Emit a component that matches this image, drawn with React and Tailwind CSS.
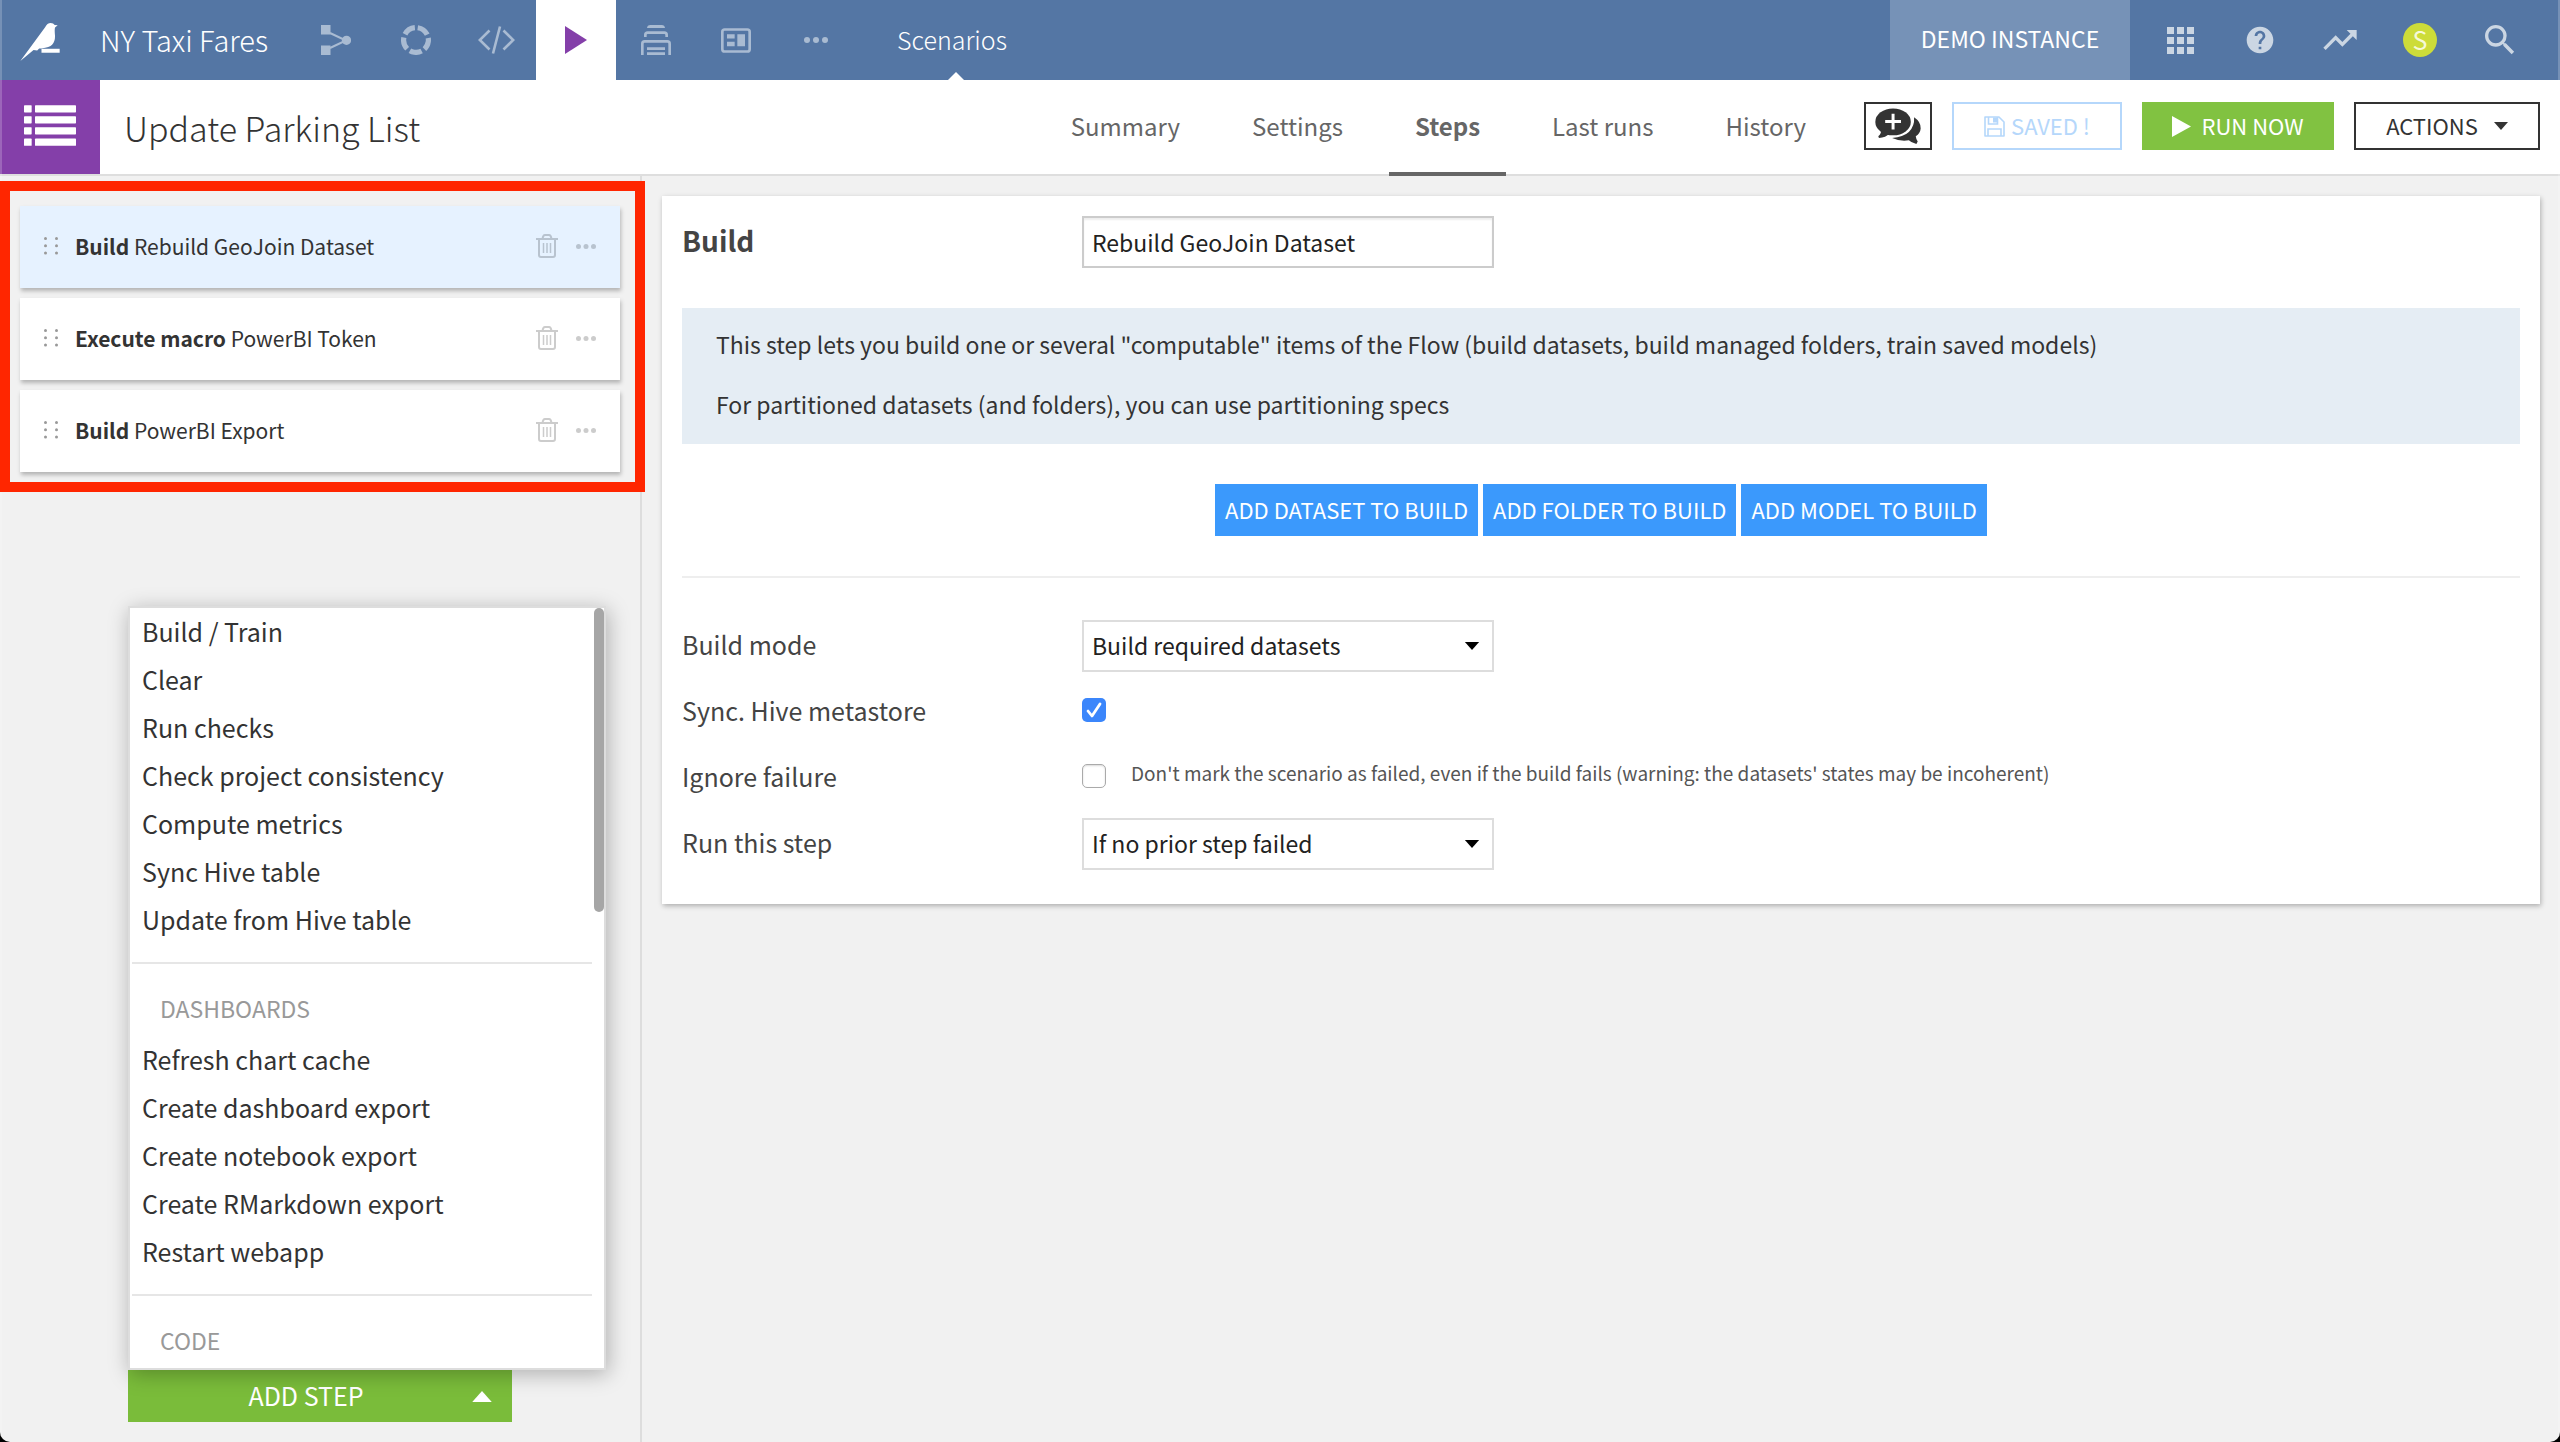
import { MdHelp, MdSearch, MdTrendingUp } from "react-icons/md";

const Bird = () => (
  <svg viewBox="60 71 121 117" className="h-10 w-10 fill-white" aria-hidden="true">
    <path d="M61 187 L136 85 Q142 72 153 72 Q161 72 165 78 L174 79 L166 86 Q164 92 166 112 Q166 128 157 138 Q150 146 125 149 L118 149 L112 155 L101 154 Z" />
    <path d="M125 150h55v12h-55z" />
  </svg>
);

const FlowIcon = () => (
  <svg viewBox="0 0 30 30" className="size-[30px] fill-current stroke-current" aria-hidden="true">
    <path d="M9 8 L25 15.500 L9 23" fill="none" strokeWidth="2" />
    <path d="M0 0h9.500v9.500H0zM0 20.500h9.500V30H0z" stroke="none" />
    <circle cx="25.500" cy="15.300" r="4.600" stroke="none" />
  </svg>
);

const RingIcon = () => (
  <svg viewBox="0 0 30 30" className="size-[30px]" aria-hidden="true">
    <circle
      cx="15"
      cy="15"
      r="12.400"
      fill="none"
      stroke="currentColor"
      strokeWidth="5.200"
      strokeDasharray="12.180 3.400"
      transform="rotate(-82 15 15)"
    />
  </svg>
);

const CodeIcon = () => (
  <svg viewBox="0 0 37 28" className="h-7 w-[37px]" fill="none" stroke="currentColor" strokeWidth="2.600" aria-hidden="true">
    <path d="M11.500 4.500 L1.800 14 L11.500 23.500 M25.500 4.500 L35.200 14 L25.500 23.500 M22 .5 L15 27.500" />
  </svg>
);

const PlayIcon = () => (
  <svg viewBox="0 0 22 28" className="h-7 w-[22px] fill-[#843fa9]" aria-hidden="true">
    <path d="M0 0 L22 14 L0 28z" />
  </svg>
);

const StackIcon = () => (
  <svg viewBox="333 75 90 90" className="size-[30px]" aria-hidden="true">
    <path d="M351 84 Q352 75 361 75 H395 Q404 75 405 84z" fill="currentColor" />
    <path
      d="M346 111 V105 Q346 98 353 98 H403 Q410 98 410 105 V111 M337 165 V131 Q337 124 344 124 H412 Q419 124 419 131 V165 M351 146 H405 M351 161 H405"
      fill="none"
      stroke="currentColor"
      strokeWidth="8"
    />
  </svg>
);

const LayoutIcon = () => (
  <svg viewBox="573 84 90 74" className="h-[25px] w-[30px]" aria-hidden="true">
    <rect x="577" y="88" width="82" height="66" rx="7" fill="none" stroke="currentColor" strokeWidth="8" />
    <path d="M591 102h23v13h-23zM591 125h23v13h-23zM622 102h23v36h-23z" fill="currentColor" />
  </svg>
);

const DotsIcon = ({ className }) => (
  <svg viewBox="0 0 24 6" className={className} fill="currentColor" aria-hidden="true">
    <circle cx="3" cy="3" r="3" />
    <circle cx="12" cy="3" r="3" />
    <circle cx="21" cy="3" r="3" />
  </svg>
);

const GridIcon = () => (
  <svg viewBox="0 0 27 27" className="size-[27px]" fill="currentColor" aria-hidden="true">
    {[0, 10, 20].map((y) =>
      [0, 10, 20].map((x) => <rect key={`${x}-${y}`} x={x} y={y} width="7" height="7" />)
    )}
  </svg>
);

const ListIcon = () => (
  <svg viewBox="72 316 156 122" className="h-[41px] w-[52px]" fill="#fff" aria-hidden="true">
    {[316, 349, 382, 416].map((y) => (
      <g key={y}>
        <rect x="72" y={y} width="23" height="22" rx="2" />
        <rect x="105" y={y} width="123" height="22" rx="2" />
      </g>
    ))}
  </svg>
);

const ChatIcon = () => (
  <svg viewBox="74 290 140 112" className="h-[37px] w-[46px]" fill="currentColor" aria-hidden="true">
    <ellipse cx="129" cy="332" rx="54" ry="41" />
    <path d="M92 350 Q95 368 84 376 L86 381 Q106 381 120 366Z" />
    <path d="M193 318 Q214 332 213 352 Q212 366 198 376 Q199 385 204 392 L200 399 Q185 396 177 388 Q150 392 126 381 Q160 379 177 363 Q195 345 193 318Z" />
    <path d="M105 331 H153 M129 307 V355" stroke="#fff" strokeWidth="9" />
  </svg>
);

const SaveIcon = () => (
  <svg viewBox="0 0 21 21" className="size-[21px]" fill="none" stroke="currentColor" strokeWidth="1.600" aria-hidden="true">
    <path d="M1 1 H15 L20 6 V20 H1z" strokeLinejoin="round" />
    <path d="M4.500 1 V8 H13.500 V1 M4 20 V13 H17 V20" />
    <path d="M9 1.500h4v5h-4z" fill="currentColor" stroke="none" />
  </svg>
);

const TrashIcon = () => (
  <svg viewBox="0 0 22 24" className="h-6 w-[22px]" fill="none" stroke="currentColor" strokeWidth="2" aria-hidden="true">
    <path d="M0 5 H22 M6.500 5 Q7 1 9 1 H13 Q15 1 15.500 5 M3 5 V21 Q3 23 5 23 H17 Q19 23 19 21 V5" />
    <path d="M7.500 9 V19 M11 9 V19 M14.500 9 V19" strokeWidth="1.500" />
  </svg>
);

const GripIcon = () => (
  <svg viewBox="0 0 14 18" className="h-[18px] w-3.5 fill-[#999]" aria-hidden="true">
    {[1.5, 8.8, 16].map((y) => (
      <g key={y}>
        <circle cx="1.500" cy={y} r="1.500" />
        <circle cx="12.500" cy={y} r="1.500" />
      </g>
    ))}
  </svg>
);

const Caret = ({ className }) => (
  <svg viewBox="0 0 16 9" className={className} fill="currentColor" aria-hidden="true">
    <path d="M0 0h16L8 9z" />
  </svg>
);

const navIcons = [
  { name: "Flow", Icon: FlowIcon },
  { name: "Lab", Icon: RingIcon },
  { name: "Code", Icon: CodeIcon },
  { name: "Automation", Icon: PlayIcon, active: true },
  { name: "Deploy", Icon: StackIcon },
  { name: "Dashboards", Icon: LayoutIcon },
  { name: "More", Icon: () => <DotsIcon className="h-1.5 w-6" /> },
];

const TopNav = () => (
  <header className="flex h-20 bg-[#5476a4] text-white">
    <a href="#home" aria-label="Home" className="flex w-20 items-center justify-center pt-1">
      <Bird />
    </a>
    <a href="#project" className="flex w-[216px] items-center pl-5 text-[29px] font-light whitespace-nowrap">
      NY Taxi Fares
    </a>
    <nav className="flex">
      {navIcons.map(({ name, Icon, active }) => (
        <a
          key={name}
          href="#nav"
          aria-label={name}
          className={
            active
              ? "flex w-20 items-center justify-center bg-white"
              : "flex w-20 items-center justify-center text-[#a9bbd2]"
          }
        >
          <Icon />
        </a>
      ))}
      <a href="#scenarios" className="relative flex items-center pr-[50px] pl-[41px] text-[25px] font-light">
        Scenarios
        <svg viewBox="0 0 16 8" className="absolute bottom-0 left-1/2 h-2 w-4 -translate-x-1/2 fill-white" aria-hidden="true">
          <path d="M0 8L8 0l8 8z" />
        </svg>
      </a>
    </nav>
    <div className="ml-auto flex w-60 items-center justify-center bg-[#7692b7] pb-1 text-[23px]">
      DEMO INSTANCE
    </div>
    <div className="flex pr-5 pl-2.5 text-[#cbd6e3]">
      <button aria-label="Applications" className="flex w-20 items-center justify-center">
        <GridIcon />
      </button>
      <button aria-label="Help" className="flex w-20 items-center justify-center">
        <MdHelp className="size-8" />
      </button>
      <button aria-label="Activity" className="flex w-20 items-center justify-center">
        <MdTrendingUp className="size-10" />
      </button>
      <button aria-label="Profile" className="flex w-20 items-center justify-center">
        <span className="flex size-[34px] items-center justify-center rounded-full bg-[#cddc39] pb-0.5 text-[25px] leading-none text-[#f6f9d8]">
          S
        </span>
      </button>
      <button aria-label="Search" className="flex w-20 items-center justify-center">
        <MdSearch className="size-10" />
      </button>
    </div>
  </header>
);

const tabs = ["Summary", "Settings", "Steps", "Last runs", "History"];

const TitleBar = () => (
  <div className="flex h-24 border-b-2 border-[#dedede] bg-white text-[#333]">
    <div className="flex w-[100px] items-center justify-center bg-[#843fa9] pb-1">
      <ListIcon />
    </div>
    <h1 className="flex items-center pl-6 text-[34px] font-light whitespace-nowrap">Update Parking List</h1>
    <nav className="-mb-0.5 ml-auto flex gap-5 pr-8">
      {tabs.map((tab) => (
        <a
          key={tab}
          href="#tab"
          aria-current={tab === "Steps" ? "page" : undefined}
          className={
            tab === "Steps"
              ? "flex items-center border-b-4 border-[#666] px-[26px] text-[24px] font-bold whitespace-nowrap text-[#666]"
              : "flex items-center border-b-4 border-transparent px-[26px] text-[24px] whitespace-nowrap text-[#666]"
          }
        >
          {tab}
        </a>
      ))}
    </nav>
    <div className="flex items-center gap-5 pr-5 pb-0.5 text-[22px] leading-8 whitespace-nowrap">
      <button aria-label="Discussions" className="flex h-12 w-[68px] items-center justify-center border-2 border-[#333]">
        <ChatIcon />
      </button>
      <button className="flex h-12 w-[170px] items-center justify-center gap-1.5 border-2 border-[#b5d7fb] text-[#b5d7fb]">
        <SaveIcon />
        <span className="pb-0.5">SAVED !</span>
      </button>
      <button className="flex h-12 w-48 items-center justify-center gap-2.5 bg-[#81c241] text-white">
        <svg viewBox="0 0 19 21" className="h-[21px] w-[19px] fill-white" aria-hidden="true">
          <path d="M0 0l19 10.500L0 21z" />
        </svg>
        <span className="pb-0.5">RUN NOW</span>
      </button>
      <button className="flex h-12 w-[186px] items-center justify-center gap-4 border-2 border-[#333]">
        <span className="pb-0.5">ACTIONS</span>
        <Caret className="h-2 w-3.5" />
      </button>
    </div>
  </div>
);

const steps = [
  { kind: "Build", name: "Rebuild GeoJoin Dataset", selected: true },
  { kind: "Execute macro", name: "PowerBI Token" },
  { kind: "Build", name: "PowerBI Export" },
];

const StepList = () => (
  <div className="relative mt-[5px] px-5 pt-[25px] pb-5">
    <ul className="flex flex-col gap-2.5">
      {steps.map(({ kind, name, selected }) => (
        <li
          key={name}
          className={
            selected
              ? "flex h-[82px] items-center bg-[#e6f2ff] px-6 pb-0.5 text-[#b8c3cf] shadow-[1px_3px_4px_rgba(0,0,0,0.25)]"
              : "flex h-[82px] items-center bg-white px-6 pb-0.5 text-[#ccc] shadow-[1px_3px_4px_rgba(0,0,0,0.25)]"
          }
        >
          <GripIcon />
          <span className="ml-[17px] flex-1 text-[21px] leading-8 text-[#333]">
            <b>{kind}</b> {name}
          </span>
          <button aria-label={`Delete ${name}`} className="mr-[18px]">
            <TrashIcon />
          </button>
          <button aria-label={`More options for ${name}`}>
            <DotsIcon className="h-[5px] w-5" />
          </button>
        </li>
      ))}
    </ul>
    <div className="pointer-events-none absolute inset-y-0 -right-[5px] left-0 z-10 border-10 border-[#ff2600]" />
  </div>
);

const menu = [
  {
    title: null,
    items: [
      "Build / Train",
      "Clear",
      "Run checks",
      "Check project consistency",
      "Compute metrics",
      "Sync Hive table",
      "Update from Hive table",
    ],
  },
  {
    title: "DASHBOARDS",
    items: [
      "Refresh chart cache",
      "Create dashboard export",
      "Create notebook export",
      "Create RMarkdown export",
      "Restart webapp",
    ],
  },
  { title: "CODE", items: [] },
];

const AddStep = () => (
  <div className="relative mt-auto mb-5 ml-32 w-96">
    <button className="flex h-[52px] w-full items-center bg-[#7abc3a] pr-5 text-[25px] leading-8 text-white">
      <span className="flex-1 pb-0.5 pl-3 text-center">ADD STEP</span>
      <Caret className="h-[11px] w-5 rotate-180" />
    </button>
    <div className="absolute bottom-full left-0 w-[478px] border-2 border-[#ddd] bg-white shadow-[2px_4px_20px_rgba(0,0,0,0.28)]">
      <div className="absolute top-0 right-0 h-[304px] w-2.5 rounded-full bg-[#a6a6a6]" />
      {menu.map(({ title, items }) => (
        <section key={title ?? "general"}>
          {title && (
            <h3 className="mt-[18px] mr-3 ml-0.5 h-[74px] border-t-2 border-[#e6e6e6] pt-7 pl-7 text-[23px] leading-8 text-[#999]">
              {title}
            </h3>
          )}
          <ul>
            {items.map((item) => (
              <li key={item}>
                <button className="h-12 w-full pb-0.5 pl-3 text-left text-[25px] leading-8 text-[#333]">{item}</button>
              </li>
            ))}
          </ul>
        </section>
      ))}
    </div>
  </div>
);

const Select = ({ id, value }) => (
  <span className="relative block h-[52px] w-[412px]">
    <select
      id={id}
      defaultValue={value}
      className="h-full w-full appearance-none border-2 border-[#ddd] bg-white pb-0.5 pl-2 text-[23px] leading-8 text-[#222]"
    >
      <option>{value}</option>
    </select>
    <Caret className="pointer-events-none absolute top-[22px] right-3.5 h-2 w-4 text-black" />
  </span>
);

const Check = ({ id, checked }) =>
  checked ? (
    <span className="relative mb-1 block size-6">
      <input id={id} type="checkbox" defaultChecked className="block size-6 appearance-none rounded-[5px] bg-[#3b86fb]" />
      <svg viewBox="0 0 24 24" className="pointer-events-none absolute inset-0 fill-none stroke-white" strokeWidth="2.800" aria-hidden="true">
        <path d="M6 13l4 5L18 6" strokeLinecap="round" strokeLinejoin="round" />
      </svg>
    </span>
  ) : (
    <input
      id={id}
      type="checkbox"
      className="mb-1 block size-6 appearance-none rounded-[5px] border border-[#aaa] bg-white shadow-[inset_0_1px_2px_rgba(0,0,0,0.15)]"
    />
  );

const Row = ({ id, label, children }) => (
  <div className="flex min-h-[52px] items-center">
    <label htmlFor={id} className="w-[400px] pb-1 text-[25px] leading-8 text-[#444]">
      {label}
    </label>
    {children}
  </div>
);

const StepEditor = () => (
  <section className="bg-white px-5 pt-5 pb-[34px] shadow-[1px_2px_5px_rgba(0,0,0,0.28)]">
    <div className="flex items-center">
      <h2 className="w-[400px] pb-1 text-[28px] leading-9 font-bold text-[#444]">Build</h2>
      <input
        aria-label="Step name"
        defaultValue="Rebuild GeoJoin Dataset"
        className="h-[52px] w-[412px] border-2 border-[#ccc] bg-white px-2 text-[23px] leading-8 text-[#222] shadow-[inset_0_2px_2px_rgba(0,0,0,0.07)]"
      />
    </div>
    <div className="mt-10 flex flex-col gap-6 bg-[#e5edf4] px-[34px] pt-[18px] pb-[22px] text-[23px] leading-9 text-[#333]">
      <p>
        This step lets you build one or several "computable" items of the Flow (build datasets, build managed folders,
        train saved models)
      </p>
      <p>For partitioned datasets (and folders), you can use partitioning specs</p>
    </div>
    <div className="mt-10 flex justify-center gap-[5px] text-[22px] leading-8 text-white">
      {["ADD DATASET TO BUILD", "ADD FOLDER TO BUILD", "ADD MODEL TO BUILD"].map((label) => (
        <button key={label} className="h-[52px] bg-[#3b99fc] px-2.5 pb-0.5">
          {label}
        </button>
      ))}
    </div>
    <hr className="mt-10 border-t-2 border-[#eee]" />
    <form className="mt-[42px] flex flex-col gap-3.5">
      <Row id="build-mode" label="Build mode">
        <Select id="build-mode" value="Build required datasets" />
      </Row>
      <Row id="sync-hive" label="Sync. Hive metastore">
        <Check id="sync-hive" checked />
      </Row>
      <Row id="ignore-failure" label="Ignore failure">
        <Check id="ignore-failure" />
        <span className="pb-2.5 pl-[25px] text-[19px] leading-7 text-[#555]">
          Don't mark the scenario as failed, even if the build fails (warning: the datasets' states may be incoherent)
        </span>
      </Row>
      <Row id="run-step" label="Run this step">
        <Select id="run-step" value="If no prior step failed" />
      </Row>
    </form>
  </section>
);

export default function App() {
  return (
    <div className="bg-black">
      <div className="relative flex min-h-screen flex-col overflow-hidden rounded-b-[10px] bg-[#f1f1f1] font-['Noto_Sans_CJK_SC','Noto_Sans',sans-serif]">
        <TopNav />
        <TitleBar />
        <div className="flex flex-1">
          <aside className="flex w-[642px] shrink-0 flex-col border-r-2 border-[#ddd]">
            <StepList />
            <AddStep />
          </aside>
          <main className="min-w-0 flex-1 p-5">
            <StepEditor />
          </main>
        </div>
        <div className="pointer-events-none absolute inset-0 border-x-2 border-white/20" />
      </div>
    </div>
  );
}
